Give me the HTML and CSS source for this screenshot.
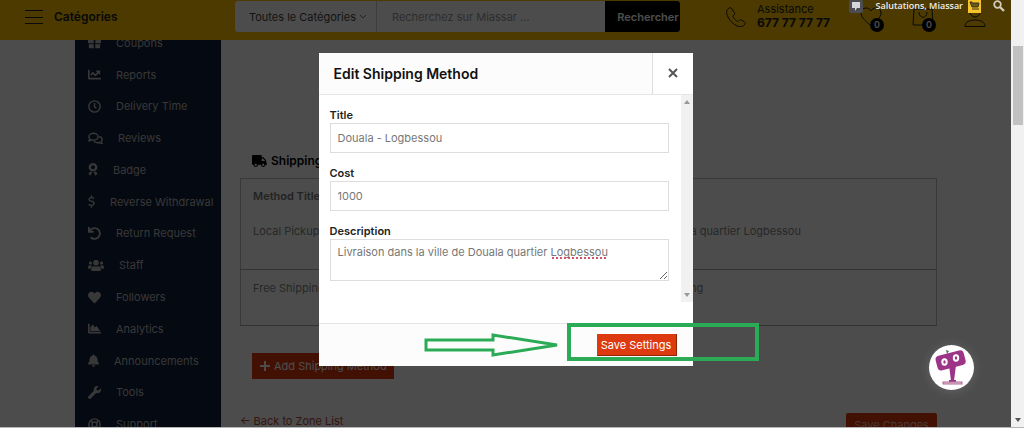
FILE: index.html
```html
<!DOCTYPE html>
<html lang="fr">
<head>
    <meta charset="UTF-8">
    <meta name="viewport" content="width=device-width, initial-scale=1.0">
    <title>Edit Shipping Method</title>
    <link rel="stylesheet" href="styles.css">
</head>
<body>

<div class="page">

    <!-- Top bar -->
    <header class="topbar">
        <button class="menu-btn" type="button">
            <span class="burger"></span>
            Catégories
        </button>
        <form class="search">
            <select class="search-cat" aria-label="Catégorie">
                <option>Toutes le Catégories</option>
            </select>
            <svg class="caret" viewBox="0 0 8 5"><path d="M1 1l3 3 3-3"/></svg>
            <input class="search-text" type="text" placeholder="Recherchez sur Miassar ..." aria-label="Recherche">
            <button class="search-btn" type="button">Rechercher</button>
        </form>
        <div class="phone">
            <svg class="line-icon" width="22" height="22" viewBox="0 0 22 22"><path d="M4 2C1 4 1 7 3 11c2 4 5 7 9 9 3 1 6 1 8-2 .5-1 0-1.500-.5-2l-3-2c-1-.5-1.600-.3-2.300.5l-1 1c-1 .5-5.500-4-5.200-5.500l1-1c.8-.8.8-1.500.4-2.200L7 3C6 1.500 5 1.500 4 2z"/></svg>
            <p class="phone-text">Assistance <strong>677 77 77 77</strong></p>
        </div>
        <nav class="shortcuts">
            <a href="#" class="shortcut" aria-label="Favoris">
                <svg class="line-icon" width="22" height="22" viewBox="0 0 22 22"><path d="M11 20C7 16 1 12 1 7c0-3 2-5 5-5 2 0 4 1 5 3 1-2 3-3 5-3 3 0 5 2 5 5 0 5-6 9-10 13z"/></svg>
                <span class="count">0</span>
            </a>
            <a href="#" class="shortcut" aria-label="Panier">
                <svg class="line-icon" width="22" height="22" viewBox="0 0 22 22"><path d="M2 3h18l1 16H1zM7 6c0 7 8 7 8 0"/></svg>
                <span class="count">0</span>
            </a>
            <a href="#" class="shortcut" aria-label="Compte">
                <svg class="line-icon" width="22" height="22" viewBox="0 0 22 22"><circle cx="11" cy="6" r="5"/><path d="M1 20c0-8 20-8 20 0v.5H1z"/></svg>
            </a>
        </nav>
    </header>

    <div class="main">
        <!-- Dashboard menu -->
        <nav class="sidebar">
            <ul class="side-list">
                <li><a href="#"><svg class="icon" width="13" viewBox="0 0 512 512"><path d="M0 160h224v128H0zM288 160h224v128H288zM32 320h192v160H32zM288 320h192v160H288zM110 150C60 90 130 20 190 60l66 80 66-80c60-40 130 30 80 90z"/></svg>Coupons</a></li>
                <li><a href="#"><svg class="icon" width="13" viewBox="0 0 512 512"><path d="M496 384H64V80c0-8.840-7.160-16-16-16H16C7.160 64 0 71.160 0 80v336c0 17.670 14.330 32 32 32h464c8.840 0 16-7.160 16-16v-32c0-8.840-7.160-16-16-16zM464 96H345.940c-21.380 0-32.090 25.850-16.970 40.970l32.400 32.400L288 242.750l-73.370-73.370c-12.500-12.500-32.760-12.500-45.250 0l-68.690 68.690c-6.250 6.250-6.250 16.380 0 22.630l22.620 22.620c6.250 6.250 16.380 6.250 22.630 0L192 237.250l73.370 73.370c12.500 12.500 32.760 12.500 45.250 0l96-96 32.400 32.400c15.120 15.120 40.970 4.410 40.970-16.970V112c0-8.840-7.150-16-16-16z"/></svg>Reports</a></li>
                <li><a href="#"><svg class="icon stroked" width="13" viewBox="0 0 512 512"><circle cx="256" cy="256" r="222"/><path d="M256 120v150l75 55"/></svg>Delivery Time</a></li>
                <li><a href="#"><svg class="icon stroked" width="15" viewBox="0 0 576 512"><path d="M208 50c-100 0-180 60-180 135 0 40 16 70 36 92-6 30-20 50-36 68 50 0 80-14 105-32 24 6 48 8 75 8 100 0 180-60 180-136S308 50 208 50z"/><path d="M420 175c75 12 128 60 128 120 0 32-14 62-36 84 6 30 20 50 36 68-50 0-80-14-105-32-90 20-180 0-223-62"/></svg>Reviews</a></li>
                <li><a href="#"><svg class="icon" width="10" viewBox="0 0 384 512"><path fill-rule="evenodd" d="M192 0l55 20 58 8 25 52 38 44-12 58 4 58-48 32-36 46-84 14-84-14-36-46-48-32 4-58-12-58 38-44 25-52 58-8zM192 88a80 80 0 1 0 0 160 80 80 0 0 0 0-160z"/><path d="M70 330l90 26-58 146-44-50-54 2zM314 330l-90 26 58 146 44-50 54 2z"/></svg>Badge</a></li>
                <li><a href="#"><svg class="icon stroked" width="7" viewBox="0 0 288 512"><path d="M144 0v90M144 422v90M240 140c-30-40-80-48-112-46C30 100 20 200 90 226l110 38c80 30 60 150-56 154-50 0-92-20-118-52"/></svg>Reverse Withdrawal</a></li>
                <li><a href="#"><svg class="icon" width="13" viewBox="0 0 512 512"><path d="M212 224H12c-7 0-12-5-12-12V12C0 5 5 0 12 0h48c7 0 12 5 12 12v78C118 39 184 7 258 8c137 1 246 112 246 249C504 393 393 504 256 504c-64 0-122-24-166-64-5-5-5-13 0-18l33-34c5-4 12-4 17 0C171 415 212 432 256 432c97 0 176-79 176-176 0-97-79-176-176-176-58 0-110 28-142 72h98c7 0 12 5 12 12v48c0 7-5 12-12 12z"/></svg>Return Request</a></li>
                <li><a href="#"><svg class="icon" width="16" viewBox="0 0 640 512"><circle cx="96" cy="160" r="64"/><circle cx="544" cy="160" r="64"/><circle cx="320" cy="144" r="112"/><path d="M0 320c0-40 25-64 64-64h64c20 0 35 6 46 18-40 26-60 62-66 110H32c-20 0-32-12-32-32zM640 320c0-40-25-64-64-64h-64c-20 0-35 6-46 18 40 26 60 62 66 110h76c20 0 32-12 32-32zM128 403c0-70 45-115 115-115 50 22 104 22 154 0 70 0 115 45 115 115v29c0 30-20 48-48 48H176c-28 0-48-18-48-48z"/></svg>Staff</a></li>
                <li><a href="#"><svg class="icon" width="13" viewBox="0 0 512 512"><path d="M462 63C407 16 326 24 276 76l-20 21-20-21C186 24 105 16 50 63c-63 53-66 149-10 207l193 200c13 13 33 13 46 0l193-200c56-58 53-154-10-207z"/></svg>Followers</a></li>
                <li><a href="#"><svg class="icon" width="13" viewBox="0 0 512 512"><path d="M496 384H64V80c0-9-7-16-16-16H16C7 64 0 71 0 80v336c0 18 14 32 32 32h464c9 0 16-7 16-16v-32c0-9-7-16-16-16zM96 352V220l80-110c8-10 20-10 26 2l62 108 54-56c8-8 20-6 26 4l136 184z"/></svg>Analytics</a></li>
                <li><a href="#"><svg class="icon" width="11" viewBox="0 0 448 512"><path d="M224 512c35 0 64-29 64-64H160c0 35 29 64 64 64zm215-150c-19-21-55-52-55-154 0-78-54-140-128-155V32c0-18-14-32-32-32s-32 14-32 32v21C119 68 64 130 64 208c0 102-36 133-55 154-6 7-9 14-9 22 0 16 13 32 32 32h384c19 0 32-16 32-32 0-8-3-15-9-22z"/></svg>Announcements</a></li>
                <li><a href="#"><svg class="icon" width="13" viewBox="0 0 512 512"><path d="M508 109c-2-9-14-12-20-5l-75 74-68-11-11-68 74-75c7-6 4-17-5-20-48-11-100 1-137 38-40 40-50 97-34 147L19 403c-25 25-25 65 0 90s65 25 90 0l213-213c50 17 108 6 148-34 37-37 49-89 38-137z"/></svg>Tools</a></li>
                <li><a href="#"><svg class="icon stroked" width="13" viewBox="0 0 512 512"><circle cx="256" cy="256" r="222"/><circle cx="256" cy="256" r="100"/><path d="M100 100l85 85M412 100l-85 85M100 412l85-85M412 412l-85-85"/></svg>Support</a></li>
            </ul>
        </nav>

        <!-- Shipping zone -->
        <main class="content">
            <h2 class="section-title">
                <svg width="15" height="12" viewBox="0 0 640 512"><path d="M624 352h-16V244c0-13-5-25-14-34L494 110c-9-9-21-14-34-14h-44V48c0-26-22-48-48-48H48C22 0 0 22 0 48v320c0 26 22 48 48 48h16c0 53 43 96 96 96s96-43 96-96h128c0 53 43 96 96 96s96-43 96-96h48c9 0 16-7 16-16v-32c0-9-7-16-16-16zM160 464c-26 0-48-21-48-48s22-48 48-48 48 21 48 48-22 48-48 48zm320 0c-26 0-48-21-48-48s22-48 48-48 48 21 48 48-22 48-48 48zm80-208H416V144h44l100 100z"/></svg>
                Shipping Method
            </h2>
            <table class="methods">
                <thead>
                    <tr><th>Method Title</th><th>Status</th><th>Description</th></tr>
                </thead>
                <tbody>
                    <tr><td>Local Pickup</td><td></td><td>Livraison dans la ville de Douala quartier Logbessou</td></tr>
                    <tr><td>Free Shipping</td><td></td><td>Livraison gratuite - Free Shipping</td></tr>
                </tbody>
            </table>
            <button class="add-btn" type="button">
                <svg width="10" height="10" viewBox="0 0 10 10"><path d="M4 0h2v4h4v2H6v4H4V6H0V4h4z"/></svg>
                Add Shipping Method
            </button>
            <div class="bottom-row">
                <a href="#" class="back-link">← Back to Zone List</a>
                <button class="save-changes" type="button">Save Changes</button>
            </div>
        </main>
    </div>

    <!-- Modal -->
    <div class="overlay">
        <section class="modal" role="dialog" aria-labelledby="modalTitle">
            <header class="modal-head">
                <h1 id="modalTitle">Edit Shipping Method</h1>
                <button class="close-btn" type="button" aria-label="Close">
                    <svg width="10" height="10" viewBox="0 0 10 10"><path d="M1 1l8 8M9 1L1 9"/></svg>
                </button>
            </header>
            <div class="modal-body">
                <form class="fields">
                    <label for="methodTitle">Title</label>
                    <input type="text" id="methodTitle" value="Douala - Logbessou">
                    <label for="methodCost">Cost</label>
                    <input type="text" id="methodCost" value="1000">
                    <label for="methodDesc">Description</label>
                    <div class="desc">
                        <textarea id="methodDesc" spellcheck="false">Livraison dans la ville de Douala quartier Logbessou</textarea>
                        <span class="spell"></span>
                    </div>
                </form>
                <div class="inner-scroll">
                    <svg width="6" height="4" viewBox="0 0 6 4"><path d="M0 4l3-4 3 4z"/></svg>
                    <svg width="6" height="4" viewBox="0 0 6 4"><path d="M0 0l3 4 3-4z"/></svg>
                </div>
            </div>
            <footer class="modal-foot">
                <svg class="arrow" width="136" height="26" viewBox="0 0 136 26"><path d="M2 8h67V3l64 10-64 10v-5H2z"/></svg>
                <span class="highlight"></span>
                <button class="save-btn" type="button">Save Settings</button>
            </footer>
        </section>
    </div>

    <!-- Admin bar, stays over the overlay -->
    <div class="adminbar">
        <svg class="bubble" width="14" height="13" viewBox="0 0 14 13"><rect width="14" height="13" rx="2" fill="#4b4d52"/><path d="M3 2h8v6H8l-2 3V8H3z" fill="#d6d8dc"/></svg>
        <span>Salutations, Miassar</span>
        <svg class="avatar" width="13" height="13" viewBox="0 0 13 13"><path d="M0 0h13v13H0z" fill="#f5c42c"/><path d="M2 2h2v1h7l-1 4H4z" fill="#6b5a1d" stroke="#3b3212"/><path d="M4 9h7" stroke="#3b3212"/></svg>
        <svg width="12" height="12" viewBox="0 0 12 12"><circle cx="4.500" cy="4.500" r="3.300" fill="none" stroke="#d0cbbb" stroke-width="1.800"/><path d="M7 7l4 4" stroke="#d0cbbb" stroke-width="2.400"/></svg>
    </div>

    <!-- Chat bot -->
    <button class="bot" type="button" aria-label="Chat">
        <svg width="45" height="45" viewBox="0 0 45 45">
            <path d="M18 9l-1-4 3 1z" fill="#4d7a4a"/>
            <path d="M20 20l7 0-2 16h-3z" fill="#9c3587"/>
            <rect x="7" y="8" width="29" height="15" rx="4" fill="#9c3587" transform="rotate(-15 21 15)"/>
            <g fill="#9c3587" stroke="#fff" stroke-width="2"><ellipse cx="15.500" cy="17" rx="2.200" ry="2.700"/><ellipse cx="27" cy="13" rx="2.200" ry="2.700"/></g>
            <path d="M20 35h7v2h-7z" fill="#9c3587"/>
            <rect x="14" y="37" width="19" height="2" fill="#e3bdd4" stroke="#b06a93"/>
        </svg>
    </button>
</div>

<!-- Page scrollbar -->
<div class="scrollbar">
    <span class="thumb"></span>
    <svg width="6" height="4" viewBox="0 0 6 4"><path d="M0 0l3 4 3-4z"/></svg>
</div>

</body>
</html>
```
FILE: styles.css
```css
* {
    box-sizing: border-box;
}
body {
    margin: 0;
    height: 100vh;
    display: flex;
    overflow: hidden;
    font-family: Inter, "Liberation Sans", sans-serif;
    font-size: 11px;
    line-height: 16px;
    background: #fff;
    border-bottom: 1px solid #b5b5b5;
}
button, input, select, textarea {
    font: inherit;
}
button {
    border: 0;
    padding: 0;
}
a {
    color: inherit;
    text-decoration: none;
}
.page {
    position: relative;
    flex: 1;
    display: flex;
    flex-direction: column;
    overflow: hidden;
}

/* top bar */
.topbar {
    flex: none;
    display: flex;
    height: 40px;
    padding-left: 25px;
    background: #fdc100;
    color: #222;
}
.menu-btn {
    display: flex;
    align-items: center;
    gap: 11px;
    width: 210px;
    height: 34px;
    background: none;
    color: #222;
    font-size: 12px;
    font-weight: 600;
}
.burger {
    width: 18px;
    height: 14px;
    border-top: 1px solid #222;
    border-bottom: 1px solid #222;
    background: linear-gradient(#222, #222) center / 100% 1px no-repeat;
}
.search {
    display: flex;
    align-items: center;
    flex: 0 0 445px;
    height: 31px;
    margin-top: 1px;
    background: #fff;
    border-radius: 3px;
    overflow: hidden;
}
.search-cat {
    width: 124px;
    height: 31px;
    padding: 0 0 0 14px;
    border: 0;
    background: none;
    appearance: none;
    color: #444;
}
.caret {
    width: 8px;
    height: 5px;
    margin-right: 9px;
    fill: none;
    stroke: #777;
}
.search-text {
    flex: 1;
    min-width: 0;
    height: 31px;
    padding: 0 15px;
    border: 0;
    border-left: 1px solid #ccc;
    background: none;
}
.search-text::placeholder {
    color: #999;
}
.search-btn {
    width: 75px;
    height: 31px;
    padding-left: 11px;
    background: #000;
    color: #fff;
    font-weight: 600;
}
.line-icon {
    fill: none;
    stroke: #222;
}
.phone {
    display: flex;
    gap: 10px;
    margin-left: 45px;
    padding-top: 6px;
}
.phone-text {
    margin: -4px 0 0;
    width: 84px;
    line-height: 14px;
}
.phone-text strong {
    display: block;
    font-size: 12px;
}
.shortcuts {
    display: flex;
    gap: 30px;
    margin-left: auto;
    padding: 6px 25px 0 0;
}
.shortcut {
    position: relative;
}
.count {
    position: absolute;
    top: 12px;
    left: 10px;
    width: 14px;
    height: 14px;
    border-radius: 50%;
    background: #000;
    color: #fff;
    font-size: 9px;
    font-weight: 600;
    line-height: 14px;
    text-align: center;
}

/* dashboard */
.main {
    flex: 1;
    display: flex;
    align-items: flex-start;
    gap: 19px;
    min-height: 0;
    padding: 0 74px 0 75px;
    overflow: hidden;
}
.sidebar {
    flex: 0 0 146px;
    height: 100%;
    background: #111e39;
}
.side-list {
    display: grid;
    grid-auto-rows: 1fr;
    height: 413px;
    margin: -13px 0 0;
    padding: 0 0 0 13px;
    list-style: none;
    color: #bbb;
}
.side-list a {
    display: flex;
    align-items: center;
    height: 100%;
    white-space: nowrap;
}
.icon {
    height: 13px;
    margin-right: 15px;
    fill: currentColor;
}
.icon.stroked {
    fill: none;
    stroke: currentColor;
    stroke-width: 56;
}
.content {
    flex: 1;
    padding-top: 112px;
}
.section-title {
    display: flex;
    align-items: center;
    gap: 4px;
    margin: 0 0 9px;
    padding-left: 12px;
    font-size: 12px;
    font-weight: 600;
    line-height: 17px;
}
.methods {
    width: 100%;
    border: 1px solid #c0c0c0;
    border-collapse: collapse;
    color: #858585;
    table-layout: fixed;
}
.methods th, .methods td {
    padding: 9px 12px;
    text-align: left;
    vertical-align: top;
}
.methods th {
    font-weight: 600;
    color: #777;
}
.methods th:first-child {
    width: 140px;
}
.methods th:last-child {
    width: 418px;
}
.methods td {
    height: 56px;
    padding-top: 10px;
    border-bottom: 1px solid #aaa;
}
.add-btn {
    display: flex;
    align-items: center;
    gap: 4px;
    width: 142px;
    height: 26px;
    margin: 27px 0 34px 12px;
    padding: 0 8px;
    background: #dd3a10;
    color: #fff;
    white-space: nowrap;
}
.add-btn svg {
    flex: none;
    fill: #fff;
}
.bottom-row {
    display: flex;
    justify-content: space-between;
    align-items: flex-start;
}
.back-link {
    color: #b54a38;
}
.save-changes {
    width: 91px;
    height: 24px;
    border-radius: 2px;
    background: #dd3a10;
    color: #f7b9a8;
}

/* modal */
.overlay {
    position: absolute;
    inset: 0;
    display: flex;
    align-items: center;
    justify-content: center;
    padding-bottom: 8px;
    background: rgba(0, 0, 0, 0.7);
}
.modal {
    width: 374px;
    background: #fff;
}
.modal-head {
    display: flex;
    justify-content: space-between;
    height: 42px;
    background: #fcfcfc;
    border-bottom: 1px solid #e6e6e6;
}
.modal-head h1 {
    margin: 0;
    padding-left: 15px;
    font-size: 14px;
    font-weight: 600;
    line-height: 41px;
    color: #111;
}
.close-btn {
    width: 41px;
    border-left: 1px solid #ddd;
    background: #fff;
}
.close-btn svg {
    stroke: #555;
    stroke-width: 2;
}
.modal-body {
    display: flex;
    margin-bottom: 21px;
}
.fields {
    flex: 1;
    padding: 12px 12px 21px 11px;
}
.fields label {
    display: block;
    font-weight: 600;
    color: #222;
}
.fields input, .fields textarea {
    display: block;
    width: 100%;
    margin: 0 0 12px;
    padding: 0 7px;
    border: 1px solid #ddd;
    border-radius: 0;
    background: #fff;
    color: #777;
}
.fields input {
    height: 30px;
}
.fields textarea {
    height: 42px;
    margin: 0;
    padding-top: 4px;
}
.desc {
    position: relative;
}
.spell {
    position: absolute;
    top: 18px;
    left: 222px;
    width: 54px;
    border-bottom: 2px dotted #d8536a;
}
.inner-scroll {
    display: flex;
    flex-direction: column;
    justify-content: space-between;
    align-items: center;
    width: 12px;
    padding: 5px 0;
    background: #f1f1f1;
    fill: #999;
}
.modal-foot {
    position: relative;
    display: flex;
    justify-content: flex-end;
    padding: 10px 16px;
    background: #fcfcfc;
    border-top: 1px solid #e3e3e3;
}
.save-btn {
    width: 80px;
    height: 22px;
    background: #dd3a10;
    border-right: 1px solid #8f2408;
    border-bottom: 1px solid #8f2408;
    color: #fff;
    white-space: nowrap;
}
.arrow {
    position: absolute;
    top: 8px;
    left: 105px;
    fill: none;
    stroke: #2bab55;
    stroke-width: 3;
}
.highlight {
    position: absolute;
    top: -1px;
    left: 248px;
    width: 192px;
    height: 38px;
    border: 4px solid #2bab55;
}

/* over the overlay */
.adminbar {
    position: absolute;
    top: 0;
    right: 6px;
    display: flex;
    align-items: center;
    height: 12px;
    color: #eee;
    font-family: "Open Sans", sans-serif;
    font-size: 9px;
    font-weight: 600;
    white-space: nowrap;
}
.bubble {
    margin-right: 12px;
}
.avatar {
    margin: 0 12px 0 5px;
}
.bot {
    position: absolute;
    right: 37px;
    bottom: 37px;
    width: 45px;
    height: 45px;
    border-radius: 50%;
    background: #fff;
    box-shadow: 0 1px 12px rgba(255, 255, 255, 0.15);
}

/* page scrollbar */
.scrollbar {
    flex: 0 0 13px;
    display: flex;
    flex-direction: column;
    justify-content: space-between;
    align-items: center;
    padding: 46px 0 5px;
    background: #f1f1f1;
    fill: #555;
}
.thumb {
    width: 10px;
    height: 79px;
    background: #c1c1c1;
}
```
